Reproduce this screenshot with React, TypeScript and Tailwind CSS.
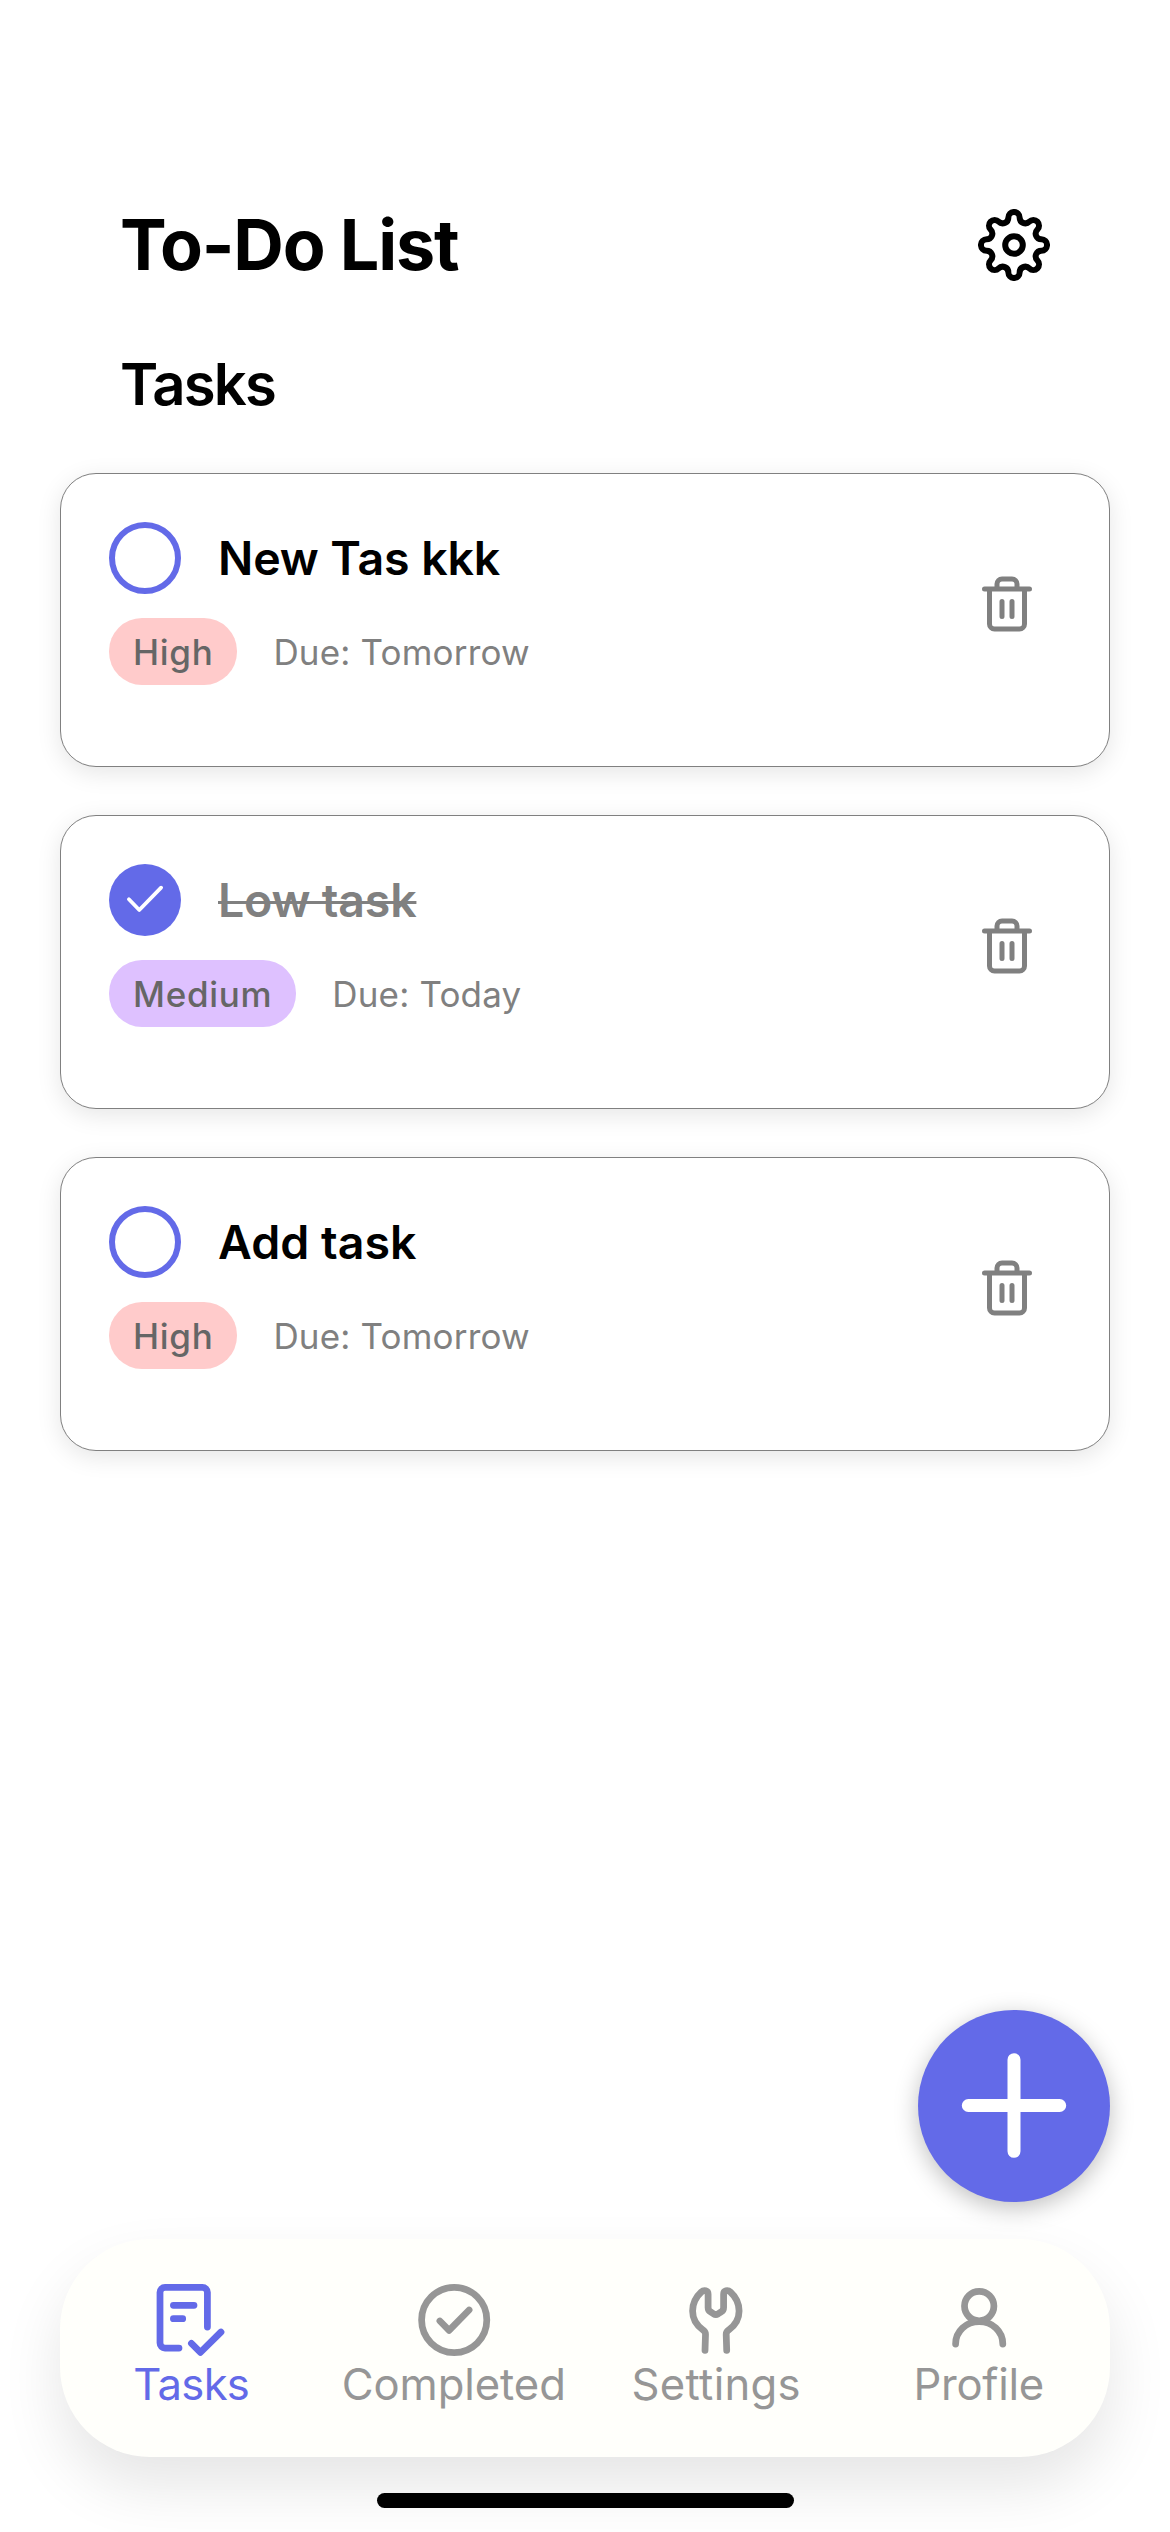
import React from "react";

type Task = {
  title: string;
  priority: "High" | "Medium";
  due: string;
  done: boolean;
  spacing: string;
};

const tasks: Task[] = [
  { title: "New Tas kkk", priority: "High", due: "Tomorrow", done: false, spacing: "tracking-[-0.12px]" },
  { title: "Low task", priority: "Medium", due: "Today", done: true, spacing: "tracking-[-0.2px]" },
  { title: "Add task", priority: "High", due: "Tomorrow", done: false, spacing: "tracking-[0.05px]" },
];

const priorityColor = {
  High: "bg-[#ffcbcb]",
  Medium: "bg-[#dec1ff]",
};

function gearPath() {
  const parts: string[] = [];
  const point = (x: number, y: number, deg: number) => {
    const a = (deg * Math.PI) / 180;
    const px = 36 + x * Math.cos(a) - y * Math.sin(a);
    const py = 36 + x * Math.sin(a) + y * Math.cos(a);
    return `${px.toFixed(2)} ${py.toFixed(2)}`;
  };
  for (let i = 0; i < 8; i++) {
    if (i === 0) parts.push(`M${point(-5.67, -27.37, 0)}`);
    parts.push(`A5.67 5.67 0 0 1 ${point(5.67, -27.37, i * 45)}`);
    parts.push(`A5.67 5.67 0 0 0 ${point(-5.67, -27.37, (i + 1) * 45)}`);
  }
  return parts.join(" ") + "Z";
}

function GearIcon() {
  return (
    <svg className="size-[72px]" viewBox="0 0 72 72" fill="none" stroke="#000" strokeWidth="6" strokeLinejoin="round">
      <path d={gearPath()} />
      <circle cx="36" cy="36" r="8.8" />
    </svg>
  );
}

function TrashIcon() {
  return (
    <svg
      className="size-[60px]"
      viewBox="0 0 24 24"
      fill="none"
      stroke="#808080"
      strokeWidth="2"
      strokeLinecap="round"
      strokeLinejoin="round"
    >
      <path d="M3 6h18M19 6v14a2 2 0 0 1-2 2H7a2 2 0 0 1-2-2V6M8 6V4a2 2 0 0 1 2-2h4a2 2 0 0 1 2 2v2M10 11v6M14 11v6" />
    </svg>
  );
}

function Checkbox({ done }: { done: boolean }) {
  if (!done) return <span className="size-[72px] shrink-0 rounded-full border-6 border-[#636ae8]" />;
  return (
    <span className="size-[72px] shrink-0 rounded-full bg-[#636ae8]">
      <svg className="size-full" viewBox="0 0 72 72" fill="none" stroke="#fff" strokeWidth="3.8" strokeLinecap="round" strokeLinejoin="round">
        <path d="M19.9 35.3 30.3 46 52.1 23.7" />
      </svg>
    </span>
  );
}

function TaskCard({ task }: { task: Task }) {
  return (
    <li className="h-[294px] rounded-[36px] border border-[#808080] bg-white p-12 shadow-[0_6px_24px_rgba(0,0,0,0.1)]">
      <div className="flex items-center justify-between">
        <div className="flex flex-col gap-6">
          <div className="flex items-center gap-[37px]">
            <Checkbox done={task.done} />
            <span
              className={`text-[46.5px] leading-[72px] font-semibold whitespace-nowrap ${task.spacing} ${
                task.done ? "text-[#808080] line-through decoration-[3px]" : "text-black"
              }`}
            >
              {task.title}
            </span>
          </div>
          <div className="flex items-center gap-9 text-[35px] leading-[65px]">
            <span
              className={`rounded-[33px] px-6 pt-0.5 font-medium tracking-[0.02em] text-[#666] ${priorityColor[task.priority]}`}
            >
              {task.priority}
            </span>
            <span className="pt-0.5 tracking-[0.17px] text-[#808080]">Due: {task.due}</span>
          </div>
        </div>
        <button className="mr-6">
          <TrashIcon />
        </button>
      </div>
    </li>
  );
}

const navItems = [
  {
    label: "Tasks",
    color: "text-[#636ae8]",
    spacing: "tracking-[-0.72px]",
    icon: (
      <path d="M52.4 43V8.3a5 5 0 0 0-5-5H10a5 5 0 0 0-5 5V59a5 5 0 0 0 5 5h14M18.4 21.3H39M18.4 34.7h9.3M36.4 59.3l9 9L66 48" />
    ),
  },
  {
    label: "Completed",
    color: "text-[#969696]",
    spacing: "tracking-[-0.07px]",
    icon: (
      <>
        <circle cx="36.2" cy="36" r="32.6" />
        <path d="M21.9 37 31.1 46.3 51.1 26" />
      </>
    ),
  },
  {
    label: "Settings",
    color: "text-[#969696]",
    spacing: "tracking-[0.3px]",
    icon: (
      <path d="M25 66.3 25.5 50.5Q25.6 48 23.3 46.2C16.5 41.5 12.6 34.6 12.6 27C12.6 19.5 16 12.8 21.3 8C24 5.5 28.1 6.4 28.1 10.2V23.4Q28.1 26.4 30.6 27.9L33.5 29.8Q35.85 31.2 38.2 29.8L41.1 27.9Q43.6 26.4 43.6 23.4V10.2C43.6 6.4 47.7 5.5 50.4 8C55.7 12.8 59.1 19.5 59.1 27C59.1 34.6 55.2 41.5 48.4 46.2Q46.1 48 46.2 50.5L46.7 66.3" />
    ),
  },
  {
    label: "Profile",
    color: "text-[#969696]",
    spacing: "tracking-[-0.25px]",
    icon: (
      <>
        <circle cx="36.2" cy="22.1" r="14.7" />
        <path d="M12.6 60C12.6 47.2 23.2 37.6 36.2 37.6S59.8 47.2 59.8 60" />
      </>
    ),
  },
];

function NavBar() {
  return (
    <nav className="grid h-[218px] w-full grid-cols-4 rounded-[90px] bg-[#fffffb] pt-[45px] shadow-[0_30px_60px_rgba(0,0,0,0.1)]">
      {navItems.map((item) => (
        <a key={item.label} className={`flex flex-col items-center gap-0.5 ${item.color}`}>
          <svg
            className="size-[72px] overflow-visible"
            viewBox="0 0 72 72"
            fill="none"
            stroke="currentColor"
            strokeWidth="6.75"
            strokeLinecap="round"
            strokeLinejoin="round"
          >
            {item.icon}
          </svg>
          <span className={`text-[43.6px] leading-[54px] ${item.spacing}`}>{item.label}</span>
        </a>
      ))}
    </nav>
  );
}

export default function App() {
  return (
    <div className="flex h-[2532px] w-[1170px] flex-col overflow-hidden bg-white px-[60px] pt-[209px] pb-6 font-['Inter',sans-serif]">
      <header className="flex items-center justify-between px-[60px]">
        <h1 className="text-[70px] leading-[72px] font-bold tracking-[-1.19px]">To-Do List</h1>
        <GearIcon />
      </header>
      <h2 className="mt-[67px] px-[60px] text-[58px] leading-[72px] font-semibold tracking-[-1.8px]">Tasks</h2>
      <ul className="mt-[53px] flex flex-col gap-12">
        {tasks.map((task) => (
          <TaskCard key={task.title} task={task} />
        ))}
      </ul>
      <footer className="mt-auto flex flex-col items-center">
        <button className="mb-[37px] size-48 self-end rounded-full bg-[#636ae8] shadow-[0_6px_23px_rgba(0,0,0,0.25)]">
          <svg className="size-full" viewBox="0 0 192 192" stroke="#fff" strokeWidth="13" strokeLinecap="round">
            <path d="M96 49.7v91.6M50.3 95.5h91.4" />
          </svg>
        </button>
        <NavBar />
        <div className="mt-9 h-[15px] w-[417px] rounded-full bg-black" />
      </footer>
    </div>
  );
}
